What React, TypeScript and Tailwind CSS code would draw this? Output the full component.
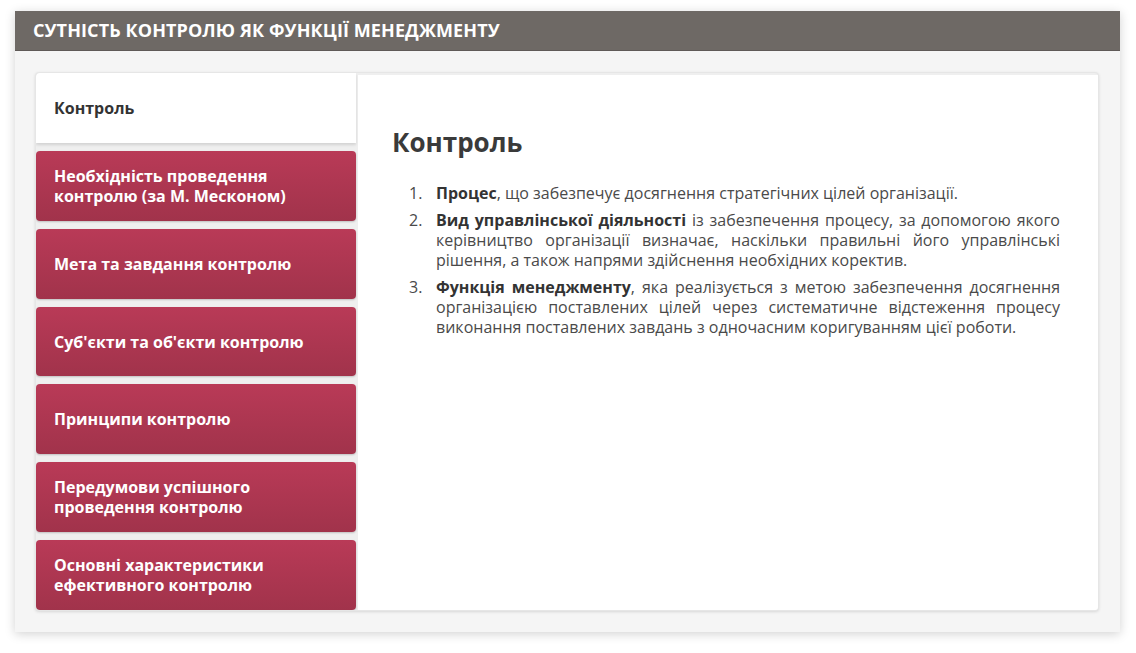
import React from "react";

const tabs = [
  "Необхідність проведення контролю (за М. Месконом)",
  "Мета та завдання контролю",
  "Суб'єкти та об'єкти контролю",
  "Принципи контролю",
  "Передумови успішного проведення контролю",
  "Основні характеристики ефективного контролю",
];

export default function App() {
  return (
    <div
      className="w-[1136px] h-[653px] bg-white pt-[11px] pl-[15px]"
      style={{ fontFamily: '"Open Sans", sans-serif' }}
    >
      <div className="w-[1105px] h-[621px] bg-[#f5f5f5] shadow-[0_2px_10px_rgba(0,0,0,0.18)] flex flex-col">
        <div className="h-[40px] bg-[#6e6965] flex items-center pl-[18px] border-b border-[#5f5a57]">
          <span className="text-white font-bold text-[18px] tracking-[0.1px]">
            СУТНІСТЬ КОНТРОЛЮ ЯК ФУНКЦІЇ МЕНЕДЖМЕНТУ
          </span>
        </div>
        <div className="pt-[21px] pl-[20px]">
          <div className="w-[1064px] h-[539px] bg-[#efefef] rounded-[4px] border border-[#e6e6e6] shadow-[0_1px_3px_rgba(0,0,0,0.12)] flex overflow-hidden">
            <div className="w-[320px] flex flex-col gap-[8px]">
              <div className="h-[70px] bg-white flex items-center pl-[18px] shadow-[0_2px_3px_rgba(0,0,0,0.12)] rounded-tl-[4px]">
                <span className="text-[16px] font-bold text-[#333333]">Контроль</span>
              </div>
              {tabs.map((t) => (
                <div
                  key={t}
                  className="h-[70px] rounded-[4px] bg-gradient-to-b from-[#b93a57] to-[#a1334b] flex items-center pl-[18px] pr-[16px] shadow-[0_1px_2px_rgba(0,0,0,0.2)]"
                >
                  <span className="text-white font-bold text-[16px] leading-[20px]">{t}</span>
                </div>
              ))}
            </div>
            <div className="flex-1 bg-white ml-[2px] mt-[2px] pl-[34px] pr-[38px] pt-[49px]">
              <h2 className="text-[26px] font-bold text-[#3a3a3a] leading-[36px]">Контроль</h2>
              <ol className="mt-[23px] text-[16px] leading-[20px] text-[#4a4a4a] text-justify flex flex-col gap-[7px]">
                <li className="flex">
                  <span className="w-[44px] shrink-0 pl-[17px]">1.</span>
                  <span>
                    <b className="text-[#333]">Процес</b>, що забезпечує досягнення стратегічних цілей організації.
                  </span>
                </li>
                <li className="flex">
                  <span className="w-[44px] shrink-0 pl-[17px]">2.</span>
                  <span>
                    <b className="text-[#333]">Вид управлінської діяльності</b> із забезпечення процесу, за допомогою якого керівництво організації визначає, наскільки правильні його управлінські рішення, а також напрями здійснення необхідних коректив.
                  </span>
                </li>
                <li className="flex">
                  <span className="w-[44px] shrink-0 pl-[17px]">3.</span>
                  <span>
                    <b className="text-[#333]">Функція менеджменту</b>, яка реалізується з метою забезпечення досягнення організацією поставлених цілей через систематичне відстеження процесу виконання поставлених завдань з одночасним коригуванням цієї роботи.
                  </span>
                </li>
              </ol>
            </div>
          </div>
        </div>
      </div>
    </div>
  );
}
